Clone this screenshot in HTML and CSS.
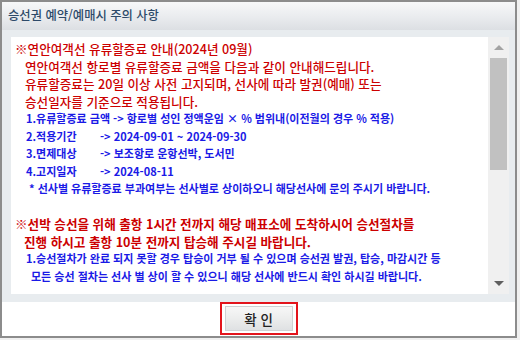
FILE: index.html
```html
<!DOCTYPE html>
<html lang="ko">
<head>
<meta charset="utf-8">
<title>승선권 예약/예매시 주의 사항</title>
<link rel="stylesheet" href="styles.css">
</head>
<body>
<div class="dialog">
  <div class="titlebar">승선권 예약/예매시 주의 사항</div>
  <div class="body">
    <div class="panel">
      <div class="content">
        <p class="red">※연안여객선 유류할증료 안내(2024년 09월)</p>
        <p class="red ind1">연안여객선 항로별 유류할증료 금액을 다음과 같이 안내해드립니다.</p>
        <p class="red ind1">유류할증료는 20일 이상 사전 고지되며, 선사에 따라 발권(예매) 또는</p>
        <p class="red ind1">승선일자를 기준으로 적용됩니다.</p>
        <p class="blue ind2">1.유류할증료 금액 -&gt; 항로별 성인 정액운임 × % 범위내(이전월의 경우 % 적용)</p>
        <p class="blue ind2"><span class="label">2.적용기간</span>-&gt; 2024-09-01 ~ 2024-09-30</p>
        <p class="blue ind2"><span class="label">3.면제대상</span>-&gt; 보조항로 운항선박, 도서민</p>
        <p class="blue ind2"><span class="label">4.고지일자</span>-&gt; 2024-08-11</p>
        <p class="blue ind3">* 선사별 유류할증료 부과여부는 선사별로 상이하오니 해당선사에 문의 주시기 바랍니다.</p>
        <p class="blank">&nbsp;</p>
        <p class="red bold">※선박 승선을 위해 출항 1시간 전까지 해당 매표소에 도착하시어 승선절차를</p>
        <p class="red bold ind4">진행 하시고 출항 10분 전까지 탑승해 주시길 바랍니다.</p>
        <p class="blue ind2">1.승선절차가 완료 되지 못할 경우 탑승이 거부 될 수 있으며 승선권 발권, 탑승, 마감시간 등</p>
        <p class="blue ind5">모든 승선 절차는 선사 별 상이 할 수 있으니 해당 선사에 반드시 확인 하시길 바랍니다.</p>
      </div>
      <div class="scrollbar">
        <div class="arrow"><span class="tri-up"></span></div>
        <div class="track"><div class="thumb"></div></div>
        <div class="arrow"><span class="tri-down"></span></div>
      </div>
    </div>
  </div>
  <div class="footer">
    <div class="highlight">
      <button class="btn" type="button">확 인</button>
    </div>
  </div>
</div>
</body>
</html>
```

FILE: styles.css
```css
html, body {
  margin: 0;
  padding: 0;
}
body {
  background: #f0f0f0;
  width: 520px;
  height: 340px;
  font-family: "Noto Sans CJK KR", "Noto Sans", sans-serif;
}
.dialog {
  width: 517px;
  height: 338px;
  box-sizing: border-box;
  border: 2px solid #8c8c8c;
  background: #ffffff;
  display: flex;
  flex-direction: column;
}
.titlebar {
  height: 28px;
  line-height: 27px;
  padding-left: 6px;
  font-size: 12.3px;
  font-weight: 500;
  color: #2d4a69;
  background: linear-gradient(to bottom, #f7f8f9 0%, #e9ebee 55%, #dcdfe3 100%);
  flex: none;
}
.body {
  background: #e8ecef;
  padding: 7px 6px 8px 9px;
  height: 257px;
  flex: none;
}
.panel {
  display: flex;
  height: 257px;
}
.content {
  flex: 1;
  background: #ffffff;
  padding: 3px 0 0 4px;
  overflow: hidden;
}
.content p {
  margin: 0;
  line-height: 17.5px;
  white-space: nowrap;
}
.red {
  color: #cc0000;
  font-size: 12.6px;
  font-weight: 500;
}
.bold {
  font-weight: bold;
}
.blue {
  color: #1a1ae6;
  font-size: 11px;
  font-weight: bold;
}
.ind1 { padding-left: 10px; }
.ind2 { padding-left: 11px; }
.ind3 { padding-left: 14px; }
.ind4 { padding-left: 9px; }
.ind5 { padding-left: 16px; }
.label {
  display: inline-block;
  width: 74px;
}
.blank {
  font-size: 12px;
}
.scrollbar {
  width: 21px;
  background: #f0f0f0;
  display: flex;
  flex-direction: column;
}
.arrow {
  height: 21px;
  display: flex;
  align-items: center;
  justify-content: center;
  flex: none;
}
.tri-up {
  width: 0;
  height: 0;
  border-left: 5px solid transparent;
  border-right: 5px solid transparent;
  border-bottom: 5px solid #a3a3a3;
}
.tri-down {
  width: 0;
  height: 0;
  border-left: 5px solid transparent;
  border-right: 5px solid transparent;
  border-top: 5px solid #5f5f5f;
}
.track {
  flex: 1;
  padding: 0 2px;
}
.thumb {
  height: 112px;
  background: #c1c1c1;
}
.footer {
  flex: 1;
  display: flex;
  justify-content: center;
  align-items: flex-start;
}
.highlight {
  border: 2px solid #e3141c;
  padding: 2px 3px;
  width: 78px;
  height: 33px;
  box-sizing: border-box;
  display: flex;
}
.btn {
  flex: 1;
  margin: 0;
  padding: 0;
  border: 1px solid #cfd1d3;
  background: linear-gradient(to bottom, #f7f7f7 0%, #eceded 50%, #dfe1e3 100%);
  font-family: "Noto Sans CJK KR", "Noto Sans", sans-serif;
  font-size: 13.5px;
  font-weight: 500;
  color: #222222;
  line-height: 22px;
}
```
